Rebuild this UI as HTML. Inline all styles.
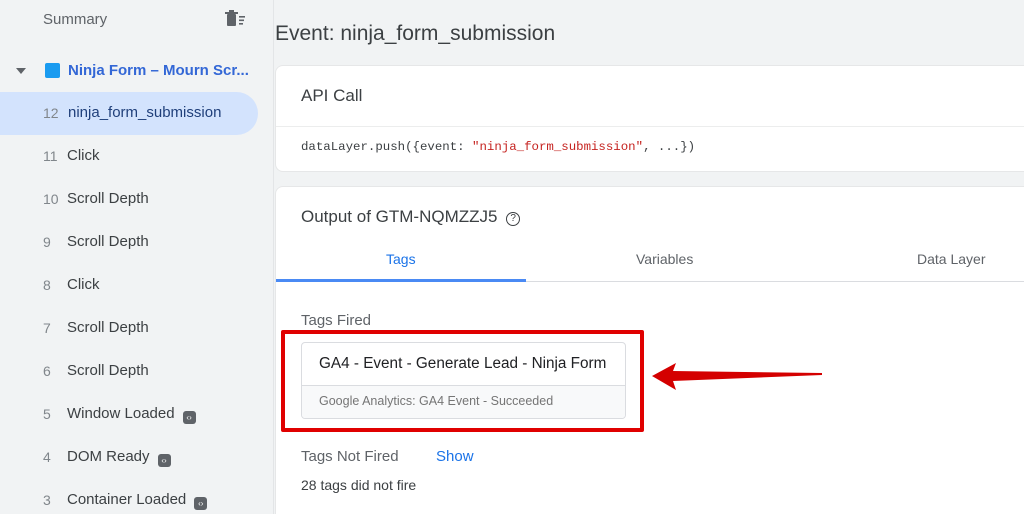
<!DOCTYPE html><html style="overflow:hidden;height:514px"><head><style>
body{margin:0;width:1024px;height:514px;overflow:hidden;background:#f1f3f4;font-family:"Liberation Sans",sans-serif;position:relative}
.a{position:absolute;white-space:nowrap}
.side{position:absolute;left:0;top:0;width:273px;height:514px;background:#f1f3f4;border-right:1px solid #e3e5e7}
.it{position:absolute;left:0;width:258px;height:43px;font-size:15px;color:#3c4043}
.it .n{position:absolute;left:43px;top:13px;color:#80868b;font-size:14px}
.it .t{position:absolute;left:67px;top:12px}
.ic{display:inline-block;width:13px;height:13px;background:#5f6368;border-radius:3px;margin-left:8px;vertical-align:-2px;color:#fff;font-size:8px;line-height:13px;text-align:center}
.card{position:absolute;left:275px;width:748px;background:#fff;border-radius:8px 0 0 8px;border:1px solid #e6e7e8;border-right:none;overflow:hidden}
</style></head><body>
<div class="side">
<div class="a" style="left:43px;top:11px;font-size:15px;color:#5f6368">Summary</div>
<svg class="a" style="left:224px;top:10px" width="24" height="18" viewBox="0 0 24 18"><rect x="3" y="4" width="9" height="12" rx="1" fill="#5f6368"/><rect x="1" y="2" width="13" height="2" fill="#5f6368"/><rect x="5" y="0" width="5" height="2" fill="#5f6368"/><rect x="15" y="6" width="6" height="1.6" fill="#5f6368"/><rect x="15" y="9.5" width="5" height="1.6" fill="#5f6368"/><rect x="15" y="13" width="4" height="1.6" fill="#5f6368"/></svg>
<div class="a" style="left:16px;top:68px;width:0;height:0;border-left:5px solid transparent;border-right:5px solid transparent;border-top:6px solid #5f6368"></div>
<div class="a" style="left:45px;top:63px;width:15px;height:15px;background:#1a9bf0;border-radius:2px"></div>
<div class="a" style="left:68px;top:62px;font-size:15px;color:#3367d6;font-weight:bold">Ninja Form – Mourn Scr...</div>
<div class="it" style="top:92px;background:#d3e3fd;border-radius:0 22px 22px 0"><span class="n">12</span><span class="t" style="color:#1f3f7a;left:68px">ninja_form_submission</span></div>
<div class="it" style="top:135px"><span class="n">11</span><span class="t">Click</span></div>
<div class="it" style="top:178px"><span class="n">10</span><span class="t">Scroll Depth</span></div>
<div class="it" style="top:221px"><span class="n">9</span><span class="t">Scroll Depth</span></div>
<div class="it" style="top:264px"><span class="n">8</span><span class="t">Click</span></div>
<div class="it" style="top:307px"><span class="n">7</span><span class="t">Scroll Depth</span></div>
<div class="it" style="top:350px"><span class="n">6</span><span class="t">Scroll Depth</span></div>
<div class="it" style="top:393px"><span class="n">5</span><span class="t">Window Loaded<span class="ic">‹›</span></span></div>
<div class="it" style="top:436px"><span class="n">4</span><span class="t">DOM Ready<span class="ic">‹›</span></span></div>
<div class="it" style="top:479px;height:35px;overflow:hidden"><span class="n">3</span><span class="t">Container Loaded<span class="ic">‹›</span></span></div>
</div>
<div class="a" style="left:275px;top:22px;font-size:21px;color:#3c4043">Event: ninja_form_submission</div>
<div class="card" style="top:65px;height:105px">
<div class="a" style="left:25px;top:20px;font-size:17px;color:#3c4043">API Call</div>
<div class="a" style="left:0;top:60px;width:748px;height:1px;background:#eceded"></div>
<div class="a" style="left:25px;top:74px;font-family:'Liberation Mono',monospace;font-size:12.4px;color:#3c4043">dataLayer.push({event: <span style="color:#c5221f">"ninja_form_submission"</span>, ...})</div>
</div>
<div class="card" style="top:186px;height:327px;border-bottom:none;border-radius:8px 0 0 0">
<div class="a" style="left:25px;top:20px;font-size:17px;color:#3c4043">Output of GTM-NQMZZJ5 <span style="display:inline-block;width:12px;height:12px;border:1.5px solid #3c4043;border-radius:50%;font-size:10px;text-align:center;line-height:12px;vertical-align:1px;margin-left:4px">?</span></div>
<div class="a" style="left:110px;top:64px;font-size:14px;color:#1a73e8">Tags</div>
<div class="a" style="left:360px;top:64px;font-size:14px;color:#5f6368">Variables</div>
<div class="a" style="left:641px;top:64px;font-size:14px;color:#5f6368">Data Layer</div>
<div class="a" style="left:0;top:94px;width:748px;height:1px;background:#dadce0"></div>
<div class="a" style="left:0;top:92px;width:250px;height:3px;background:#4a8af4"></div>
<div class="a" style="left:25px;top:125px;font-size:15px;color:#5f6368">Tags Fired</div>
<div class="a" style="left:25px;top:155px;width:323px;height:75px;border:1px solid #dadce0;border-radius:4px;overflow:hidden">
<div class="a" style="left:17px;top:12px;font-size:15.3px;color:#202124">GA4 - Event - Generate Lead - Ninja Form</div>
<div class="a" style="left:0;top:42px;width:323px;height:33px;background:#f8f9fa;border-top:1px solid #dadce0"></div>
<div class="a" style="left:17px;top:51px;font-size:12.5px;color:#757575">Google Analytics: GA4 Event - Succeeded</div>
</div>
<div class="a" style="left:25px;top:261px;font-size:15px;color:#5f6368">Tags Not Fired</div>
<div class="a" style="left:160px;top:261px;font-size:15px;color:#1a73e8">Show</div>
<div class="a" style="left:25px;top:290px;font-size:14px;color:#3c4043">28 tags did not fire</div>
</div>
<div class="a" style="left:281px;top:330px;width:355px;height:94px;border:4px solid #e00000;border-radius:2px"></div>
<svg class="a" style="left:640px;top:355px" width="190" height="45" viewBox="640 355 190 45"><path d="M652 376 L676 363 L673 371 L822 373 L822 375 L673 381 L676 390 Z" fill="#d40000"/></svg>
</body></html>
